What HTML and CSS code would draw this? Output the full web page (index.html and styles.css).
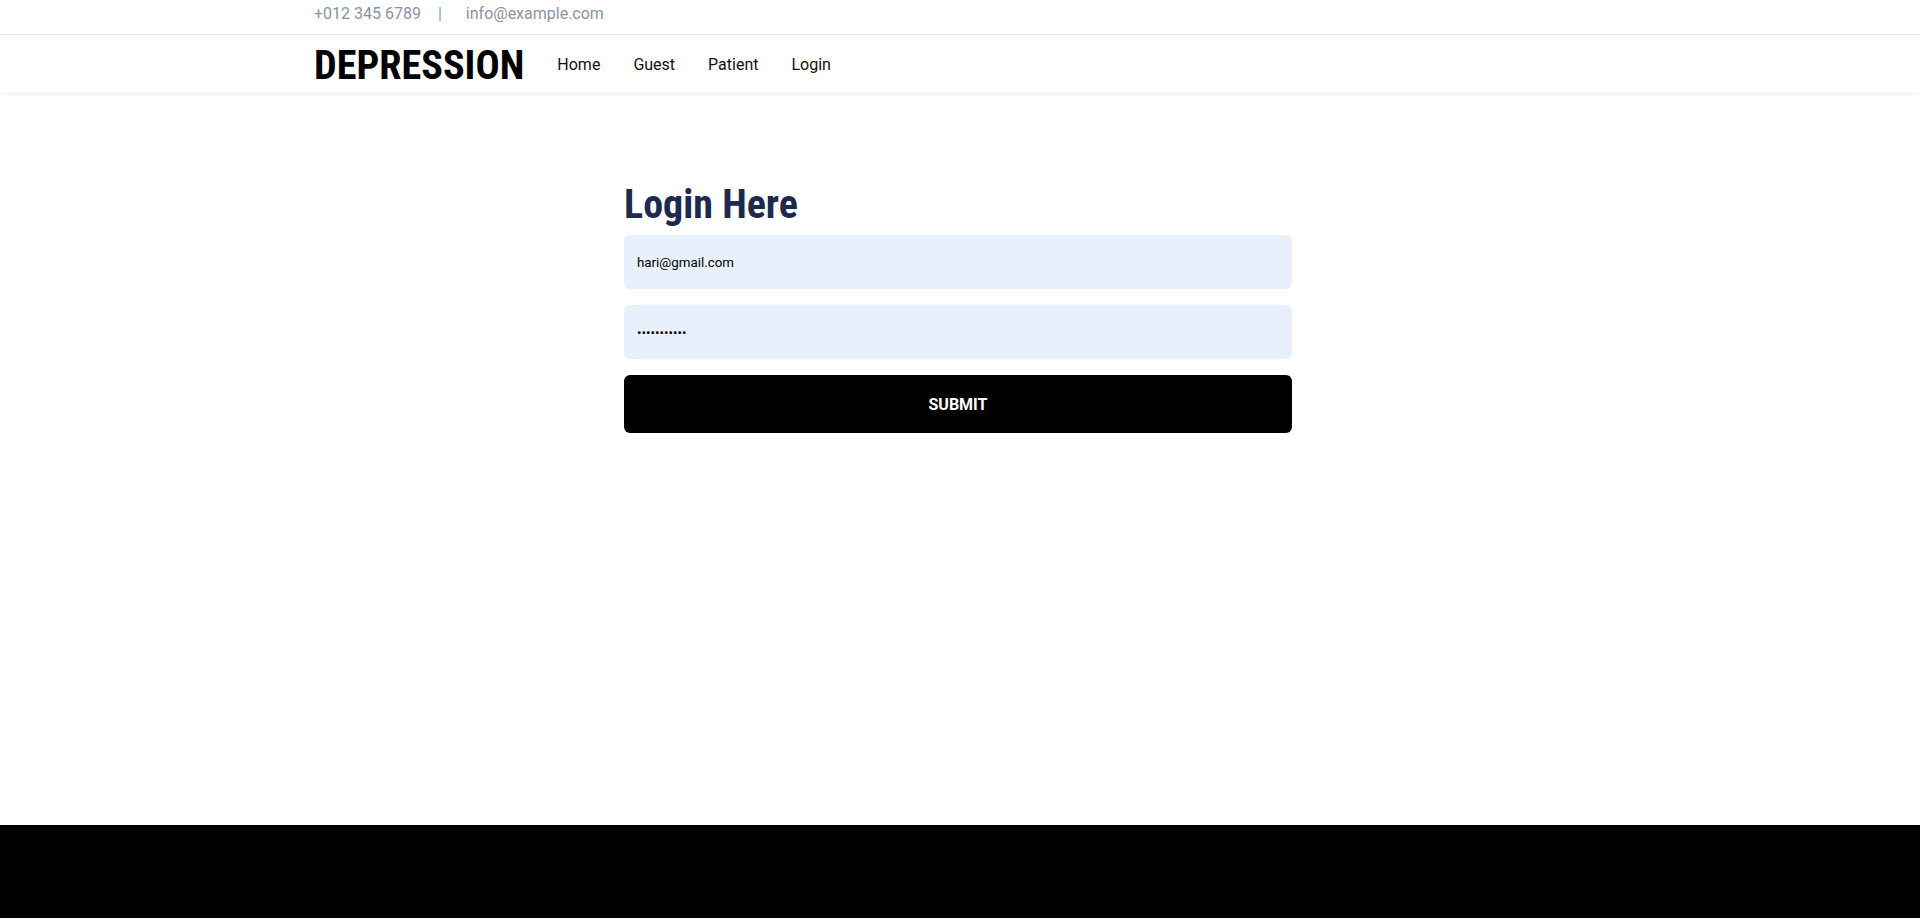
FILE: index.html
```html
<!DOCTYPE html>
<html lang="en">
<head>
<meta charset="utf-8">
<title>Depression - Login</title>
<link rel="stylesheet" href="styles.css">
</head>
<body>
<div class="page">
  <div class="topbar">
    <div class="container topbar-inner">
      <span class="top-item">+012 345 6789</span>
      <span class="top-sep">|</span>
      <span class="top-item">info@example.com</span>
    </div>
  </div>
  <header class="navbar">
    <div class="container nav-inner">
      <a class="brand" href="#">DEPRESSION</a>
      <nav class="nav-links">
        <a href="#">Home</a>
        <a href="#">Guest</a>
        <a href="#">Patient</a>
        <a href="#">Login</a>
      </nav>
    </div>
  </header>
  <main class="main">
    <form class="login-form">
      <h1 class="login-title">Login Here</h1>
      <input class="field" type="email" value="hari@gmail.com">
      <input class="field" type="password" value="hari@123456">
      <button class="submit" type="button">SUBMIT</button>
    </form>
  </main>
  <footer class="footer"></footer>
</div>
</body>
</html>
```

FILE: styles.css
```css
* { box-sizing: border-box; }
html, body { margin: 0; padding: 0; }
body {
  font-family: Roboto, "Liberation Sans", sans-serif;
  background: #fff;
  color: #111;
}
.page {
  min-height: 100vh;
  display: flex;
  flex-direction: column;
}
.container {
  width: 1320px;
  margin: 0 auto;
  padding: 0 12px 0 14px;
}
.topbar {
  height: 35px;
  border-bottom: 1px solid #e6e6e6;
}
.topbar-inner {
  display: flex;
  align-items: flex-start;
  padding-top: 4px;
  height: 100%;
  font-size: 16px;
  line-height: 19px;
  color: #8b93a6;
}
.top-sep {
  margin: 0 24px 0 17px;
  color: #8b9bb8;
}
.navbar {
  height: 58px;
  box-shadow: 0 2px 4px rgba(0,0,0,0.06);
  position: relative;
  z-index: 1;
}
.nav-inner {
  display: flex;
  align-items: center;
  height: 100%;
}
.brand {
  font-family: "Roboto Condensed", Roboto, sans-serif;
  font-stretch: condensed;
  font-weight: 700;
  font-size: 40.2px;
  color: #000;
  text-decoration: none;
  margin-right: 33px;
  padding-top: 2px;
}
.nav-links {
  display: flex;
  gap: 33px;
}
.nav-links a {
  font-size: 16px;
  color: #111;
  text-decoration: none;
}
.main {
  flex: 1;
  display: flex;
  justify-content: center;
  padding-top: 88px;
}
.login-form {
  width: 668px;
  margin-right: 4px;
  display: flex;
  flex-direction: column;
}
.login-title {
  font-family: "Roboto Condensed", Roboto, sans-serif;
  font-stretch: condensed;
  font-weight: 700;
  font-size: 40px;
  line-height: 48px;
  color: #1d2a4d;
  margin: 0 0 6px;
}
.field {
  height: 54px;
  border: 1px solid transparent;
  border-radius: 6px;
  background: #e8f0fe;
  padding: 0 12px;
  font-family: Roboto, sans-serif;
  font-size: 13.33px;
  color: #000;
  margin-bottom: 16px;
  outline: none;
}
.submit {
  height: 58px;
  border: none;
  border-radius: 6px;
  background: #000;
  color: #fff;
  font-family: Roboto, sans-serif;
  font-weight: 700;
  font-size: 16px;
}
.footer {
  height: 93px;
  background: #000;
}
```
